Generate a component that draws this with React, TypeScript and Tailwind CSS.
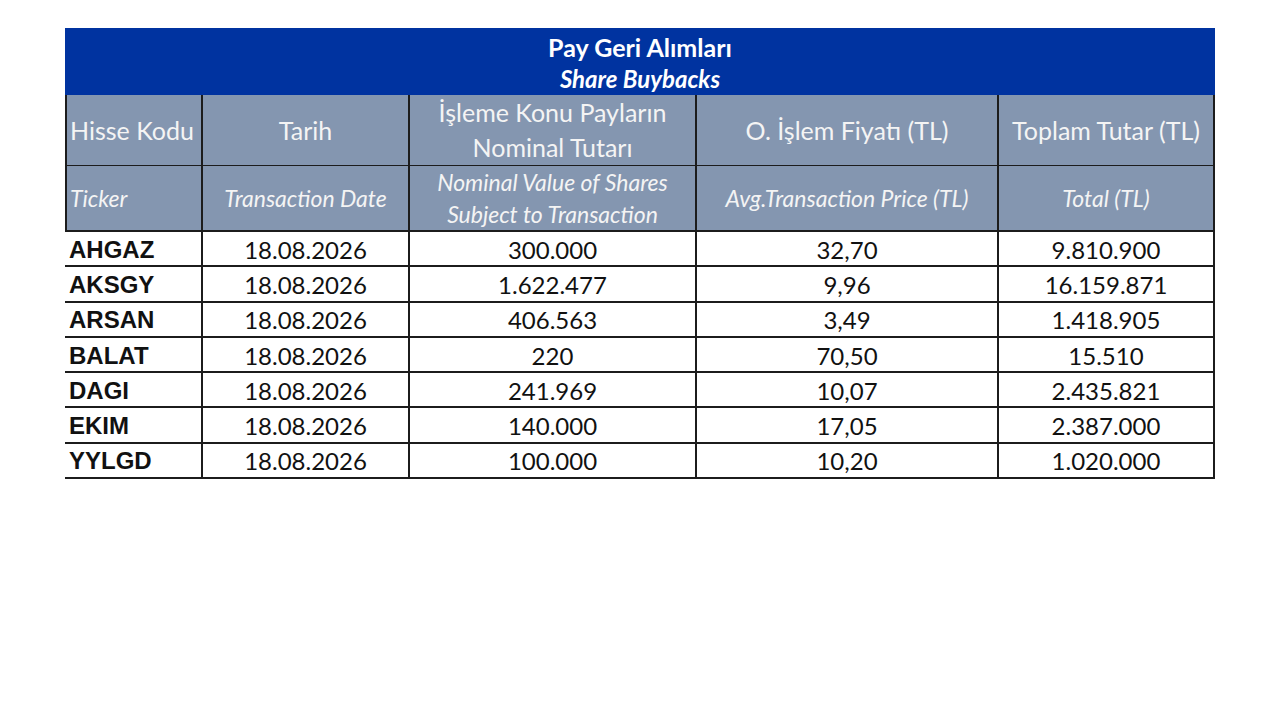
import React from 'react';

// ─────────────────────────────────────────────────────────────────────────────
// Data
// ─────────────────────────────────────────────────────────────────────────────

interface Buyback {
  ticker: string;
  date: string;
  nominal: string;
  price: string;
  total: string;
}

const ROWS: Buyback[] = [
  { ticker: 'AHGAZ', date: '18.08.2026', nominal: '300.000', price: '32,70', total: '9.810.900' },
  { ticker: 'AKSGY', date: '18.08.2026', nominal: '1.622.477', price: '9,96', total: '16.159.871' },
  { ticker: 'ARSAN', date: '18.08.2026', nominal: '406.563', price: '3,49', total: '1.418.905' },
  { ticker: 'BALAT', date: '18.08.2026', nominal: '220', price: '70,50', total: '15.510' },
  { ticker: 'DAGI', date: '18.08.2026', nominal: '241.969', price: '10,07', total: '2.435.821' },
  { ticker: 'EKIM', date: '18.08.2026', nominal: '140.000', price: '17,05', total: '2.387.000' },
  { ticker: 'YYLGD', date: '18.08.2026', nominal: '100.000', price: '10,20', total: '1.020.000' },
];

const GRID = 'grid grid-cols-[138px_207px_287px_302px_216px]';
const HEAD = 'flex items-center border-r-2 border-b-2 border-[#1c1c1c] bg-[#8496b0] text-[#f4f4f4]';
const CELL = 'flex items-center h-[35.3px] pt-[2px] border-r-2 border-b-2 border-[#1c1c1c] text-[24px] text-[#111]';

// ─────────────────────────────────────────────────────────────────────────────
// Page
// ─────────────────────────────────────────────────────────────────────────────

export default function App() {
  return (
    <div className="w-[1280px] h-[720px] bg-white pt-[28px] pl-[65px] font-['Lato','Open_Sans',sans-serif]">
      <div className="w-[1150px]">
        {/* Title band */}
        <div className="h-[67px] bg-[#0033a0] flex flex-col items-center text-white">
          <div className="mt-[4px] text-[25px] font-bold leading-[30px]">Pay Geri Alımları</div>
          <div className="mt-[2px] text-[24px] font-bold italic leading-[30px]">Share Buybacks</div>
        </div>

        {/* Turkish header row */}
        <div className={`${GRID} h-[71px] text-[25px] leading-[35px]`}>
          <div className={`${HEAD} border-l-2 pl-[3px]`}>Hisse Kodu</div>
          <div className={`${HEAD} justify-center`}>Tarih</div>
          <div className={`${HEAD} flex-col justify-center text-center`}>
            <span>İşleme Konu Payların</span>
            <span>Nominal Tutarı</span>
          </div>
          <div className={`${HEAD} justify-center`}>O. İşlem Fiyatı (TL)</div>
          <div className={`${HEAD} justify-center`}>Toplam Tutar (TL)</div>
        </div>

        {/* English header row */}
        <div className={`${GRID} h-[66px] text-[23px] italic leading-[32px]`}>
          <div className={`${HEAD} border-l-2 pl-[3px]`}>Ticker</div>
          <div className={`${HEAD} justify-center`}>Transaction Date</div>
          <div className={`${HEAD} flex-col justify-center text-center`}>
            <span>Nominal Value of Shares</span>
            <span>Subject to Transaction</span>
          </div>
          <div className={`${HEAD} justify-center`}>Avg.Transaction Price (TL)</div>
          <div className={`${HEAD} justify-center`}>Total (TL)</div>
        </div>

        {/* Data rows */}
        {ROWS.map((row) => (
          <div key={row.ticker} className={GRID}>
            <div className={`${CELL} pl-[4px] font-bold font-['Liberation_Sans',sans-serif] text-[22px]`}>{row.ticker}</div>
            <div className={`${CELL} justify-center`}>{row.date}</div>
            <div className={`${CELL} justify-center`}>{row.nominal}</div>
            <div className={`${CELL} justify-center`}>{row.price}</div>
            <div className={`${CELL} justify-center`}>{row.total}</div>
          </div>
        ))}
      </div>
    </div>
  );
}
